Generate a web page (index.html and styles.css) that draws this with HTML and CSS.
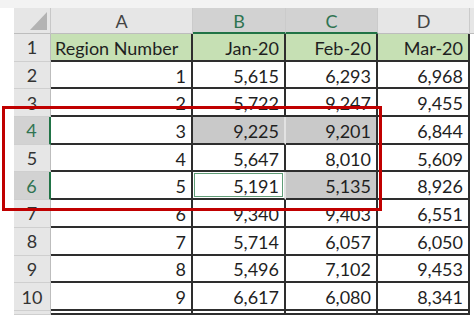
FILE: index.html
```html
<!DOCTYPE html>
<html lang="en">
<head>
  <meta charset="UTF-8" />
  <title>Region Numbers - Sheet</title>
  <link rel="stylesheet" href="styles.css">
</head>
<body>

  <div class="page">
    <div class="grid">
      <!-- column headers -->
      <div class="corner"><span class="tri"></span></div>
      <div class="col-head">A</div>
      <div class="col-head sel">B</div>
      <div class="col-head sel">C</div>
      <div class="col-head">D</div>
      <div class="col-head last"></div>

      <!-- row 1 -->
      <div class="row-head">1</div>
      <div class="cell title txt">Region Number</div>
      <div class="cell title">Jan-20</div>
      <div class="cell title">Feb-20</div>
      <div class="cell title">Mar-20</div>
      <div class="blank"></div>

      <div class="row-head">2</div>
      <div class="cell">1</div>
      <div class="cell">5,615</div>
      <div class="cell">6,293</div>
      <div class="cell">6,968</div>
      <div class="blank"></div>

      <div class="row-head">3</div>
      <div class="cell">2</div>
      <div class="cell">5,722</div>
      <div class="cell">9,247</div>
      <div class="cell">9,455</div>
      <div class="blank"></div>

      <div class="row-head sel">4</div>
      <div class="cell">3</div>
      <div class="cell shade joined">9,225</div>
      <div class="cell shade">9,201</div>
      <div class="cell">6,844</div>
      <div class="blank"></div>

      <div class="row-head">5</div>
      <div class="cell">4</div>
      <div class="cell">5,647</div>
      <div class="cell">8,010</div>
      <div class="cell">5,609</div>
      <div class="blank"></div>

      <div class="row-head sel">6</div>
      <div class="cell">5</div>
      <div class="cell active joined">5,191</div>
      <div class="cell shade">5,135</div>
      <div class="cell">8,926</div>
      <div class="blank"></div>

      <div class="row-head">7</div>
      <div class="cell">6</div>
      <div class="cell">9,340</div>
      <div class="cell">9,403</div>
      <div class="cell">6,551</div>
      <div class="blank"></div>

      <div class="row-head">8</div>
      <div class="cell">7</div>
      <div class="cell">5,714</div>
      <div class="cell">6,057</div>
      <div class="cell">6,050</div>
      <div class="blank"></div>

      <div class="row-head">9</div>
      <div class="cell">8</div>
      <div class="cell">5,496</div>
      <div class="cell">7,102</div>
      <div class="cell">9,453</div>
      <div class="blank"></div>

      <div class="row-head">10</div>
      <div class="cell">9</div>
      <div class="cell">6,617</div>
      <div class="cell">6,080</div>
      <div class="cell">8,341</div>
      <div class="blank"></div>

      <div class="row-head"></div>
      <div class="cell"></div>
      <div class="cell"></div>
      <div class="cell"></div>
      <div class="cell"></div>
      <div class="blank"></div>
    </div>

    <!-- red callout round rows 4-6 -->
    <div class="callout"></div>
  </div>

</body>
</html>
```

FILE: styles.css
```css
* {
  margin: 0;
  padding: 0;
  box-sizing: border-box;
}

body {
  background: #ffffff;
  font-family: Lato, "Open Sans", sans-serif;
  font-size: 18px;
  color: #1f1f1f;
  overflow: hidden;
}

.page {
  position: relative;
  width: 474px;
  height: 315px;
  padding: 8px 0 0 14px;
  overflow: hidden;
  background: linear-gradient(#f3f3f3 8px, #ffffff 8px);
}

.grid {
  display: grid;
  grid-template-columns: 37px 142px 93px 92px 92px 1fr;
  grid-template-rows: 26px repeat(10, 27.7px) 4px;
  background: #ffffff;
}

/* headers */
.corner {
  position: relative;
  background: #e6e6e6;
  border-right: 1px solid #c8c8c8;
  border-bottom: 1px solid #bdbdbd;
}

.corner .tri {
  position: absolute;
  right: 3px;
  bottom: 3px;
  width: 17px;
  height: 18px;
  background: #b3b3b3;
  clip-path: polygon(100% 0, 100% 100%, 0 100%);
}

.col-head {
  background: #e6e6e6;
  color: #444;
  display: flex;
  align-items: center;
  justify-content: center;
  border-right: 1px solid #cbcbcb;
  border-bottom: 1px solid #bdbdbd;
  padding-top: 1px;
}

.col-head.sel {
  background: #d2d2d2;
  color: #2f7451;
  border-bottom: 2px solid #217346;
}

.col-head.last {
  border-right: none;
}

.row-head {
  background: #e6e6e6;
  color: #333;
  display: flex;
  align-items: center;
  justify-content: center;
  border-right: 1px solid #bdbdbd;
  border-bottom: 1px solid #cfcfcf;
}

.row-head.sel {
  background: #d2d2d2;
  color: #2f7451;
  border-right: 2px solid #217346;
}

/* cells */
.cell {
  display: flex;
  align-items: center;
  justify-content: flex-end;
  padding: 2px 5px 0 4px;
  border-right: 2px solid #2e2e2e;
  border-bottom: 2px solid #2e2e2e;
  white-space: nowrap;
}

.cell.title {
  background: #c6e0b4;
}

.cell.txt {
  justify-content: flex-start;
}

.cell.shade {
  background: #c9c9c9;
}

.cell.joined {
  border-right-color: #e2e2e2;
}

.cell.active {
  box-shadow: inset 0 0 0 1px #ffffff, inset 0 0 0 2px #5f9c76;
}

.blank {
  background: #ffffff;
}

.callout {
  position: absolute;
  left: 2px;
  top: 106px;
  width: 380px;
  height: 105px;
  border: 3px solid #c00000;
}
```
